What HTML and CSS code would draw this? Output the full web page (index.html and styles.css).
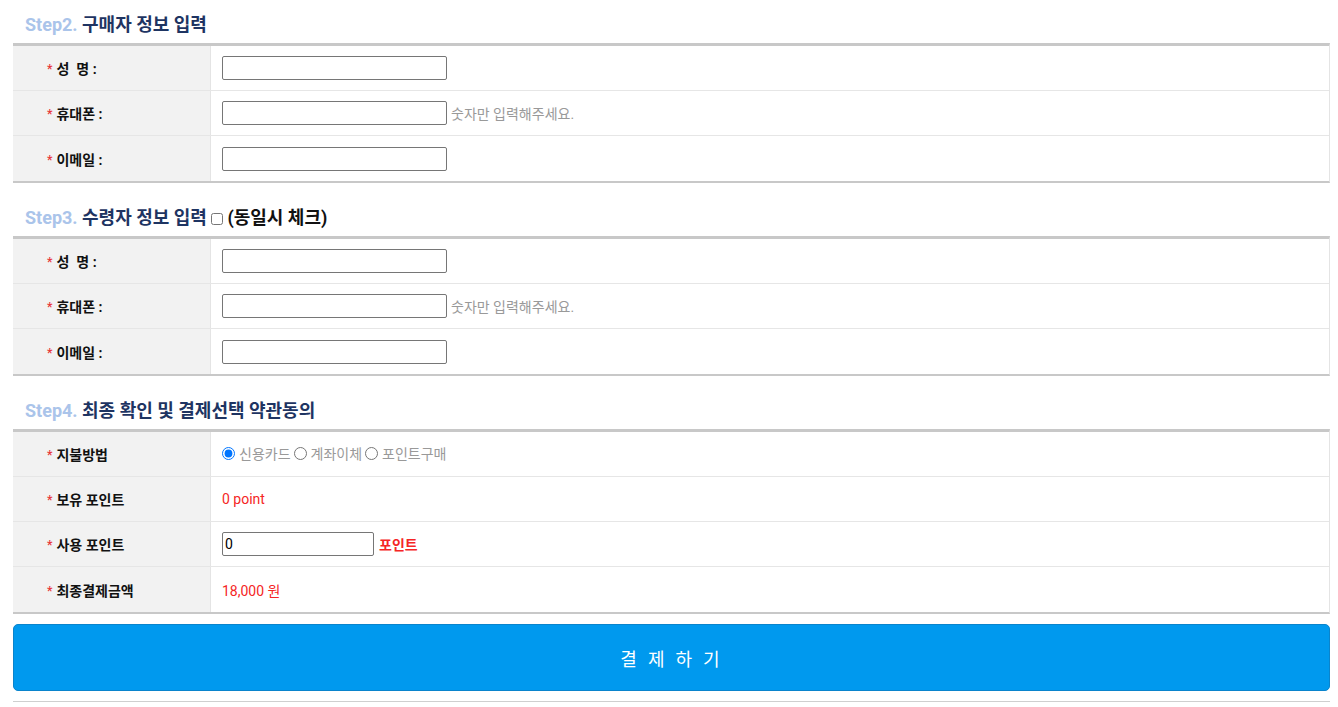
FILE: index.html
```html
<!DOCTYPE html>
<html lang="ko">
<head>
<meta charset="UTF-8" />
<title>주문서 작성</title>
<link rel="stylesheet" href="styles.css">
</head>
<body>
<div class="wrap">

  <!-- 구매자 -->
  <h3 class="stepTitle first"><span class="stepNo">Step2.</span> 구매자 정보 입력</h3>
  <div class="formTable">
    <div class="row">
      <div class="th"><span class="req">*</span>성&nbsp;&nbsp;명 :</div>
      <div class="td"><input type="text" class="inp" /></div>
    </div>
    <div class="row">
      <div class="th"><span class="req">*</span>휴대폰 :</div>
      <div class="td"><input type="text" class="inp" /><span class="hint">숫자만 입력해주세요.</span></div>
    </div>
    <div class="row">
      <div class="th"><span class="req">*</span>이메일 :</div>
      <div class="td"><input type="text" class="inp" /></div>
    </div>
  </div>

  <!-- 수령자 -->
  <h3 class="stepTitle"><span class="stepNo">Step3.</span> 수령자 정보 입력 <input type="checkbox" class="sameChk" /><span class="sameTxt">(동일시 체크)</span></h3>
  <div class="formTable">
    <div class="row">
      <div class="th"><span class="req">*</span>성&nbsp;&nbsp;명 :</div>
      <div class="td"><input type="text" class="inp" /></div>
    </div>
    <div class="row">
      <div class="th"><span class="req">*</span>휴대폰 :</div>
      <div class="td"><input type="text" class="inp" /><span class="hint">숫자만 입력해주세요.</span></div>
    </div>
    <div class="row">
      <div class="th"><span class="req">*</span>이메일 :</div>
      <div class="td"><input type="text" class="inp" /></div>
    </div>
  </div>

  <!-- 결제 -->
  <h3 class="stepTitle"><span class="stepNo">Step4.</span> 최종 확인 및 결제선택 약관동의</h3>
  <div class="formTable">
    <div class="row">
      <div class="th"><span class="req">*</span>지불방법</div>
      <div class="td radios">
        <label><input type="radio" name="pay" checked />신용카드</label>
        <label><input type="radio" name="pay" />계좌이체</label>
        <label><input type="radio" name="pay" />포인트구매</label>
      </div>
    </div>
    <div class="row">
      <div class="th"><span class="req">*</span>보유 포인트</div>
      <div class="td"><span class="red">0 point</span></div>
    </div>
    <div class="row">
      <div class="th"><span class="req">*</span>사용 포인트</div>
      <div class="td"><input type="text" class="inp small" value="0" /><span class="red bold">포인트</span></div>
    </div>
    <div class="row">
      <div class="th"><span class="req">*</span>최종결제금액</div>
      <div class="td"><span class="red">18,000 원</span></div>
    </div>
  </div>

  <button class="payBtn">결 제 하 기</button>
  <div class="bottomLine"></div>
</div>
</body>
</html>
```

FILE: styles.css
```css
body {
  margin: 0;
  font-family: Roboto, "Noto Sans CJK KR", sans-serif;
  font-size: 14px;
  color: #222;
  background: #fff;
}
.wrap {
  margin: 0 8px 0 13px;
}

/* 단계 제목 */
.stepTitle {
  margin: 19px 0 4px 12px;
  padding-top: 2px;
  height: 28px;
  font-size: 18px;
  line-height: 28px;
  font-weight: bold;
  color: #1e3462;
  overflow: hidden;
}
.stepTitle.first { margin-top: 9px; }
.stepNo { color: #aac4ea; }
.sameChk {
  width: 12px;
  height: 12px;
  margin: 0 4px 0 0;
  vertical-align: -1px;
}
.sameTxt { color: #111; }

/* 입력 테이블 */
.formTable {
  border-top: 3px solid #c8c8c8;
  border-bottom: 2px solid #c8c8c8;
  border-right: 1px solid #e4e4e4;
}
.row {
  display: flex;
  height: 44px;
  border-bottom: 1px solid #e6e6e6;
}
.row:last-child { border-bottom: none; height: 45px; }
.th {
  width: 163px;
  padding-left: 34px;
  background: #f2f2f2;
  border-right: 1px solid #e4e4e4;
  display: flex;
  align-items: center;
  font-weight: bold;
  color: #111;
}
.req {
  color: #e8383b;
  font-size: 12px;
  margin-right: 4px;
  position: relative;
  top: 1px;
}
.td {
  flex: 1;
  display: flex;
  align-items: center;
  padding-left: 11px;
}
.inp {
  box-sizing: border-box;
  width: 225px;
  height: 24px;
  border: 1px solid #767676;
  border-radius: 2px;
  padding: 1px 2px;
  font-family: Roboto, "Noto Sans CJK KR", sans-serif;
  font-size: 14px;
  margin: 0;
}
.inp.small { width: 152px; }
.hint {
  color: #999;
  margin-left: 4px;
}
.red { color: #f52525; }
.bold { font-weight: bold; margin-left: 5px; }

.radios { color: #999; }
.radios label {
  display: flex;
  align-items: center;
  margin-right: 3px;
  position: relative;
  top: -1px;
}
.radios input {
  margin: 0 4px 0 0;
  width: 13px;
  height: 13px;
}

/* 결제 버튼 */
.payBtn {
  display: block;
  width: 100%;
  height: 67px;
  margin-top: 10px;
  background: #0099ee;
  border: 1px solid #0a84cc;
  border-radius: 5px;
  color: #fff;
  font-family: "Noto Sans CJK KR", sans-serif;
  font-size: 18px;
  letter-spacing: 3px;
  cursor: pointer;
}
.bottomLine {
  margin-top: 10px;
  border-top: 1px solid #cfcfcf;
}
```
